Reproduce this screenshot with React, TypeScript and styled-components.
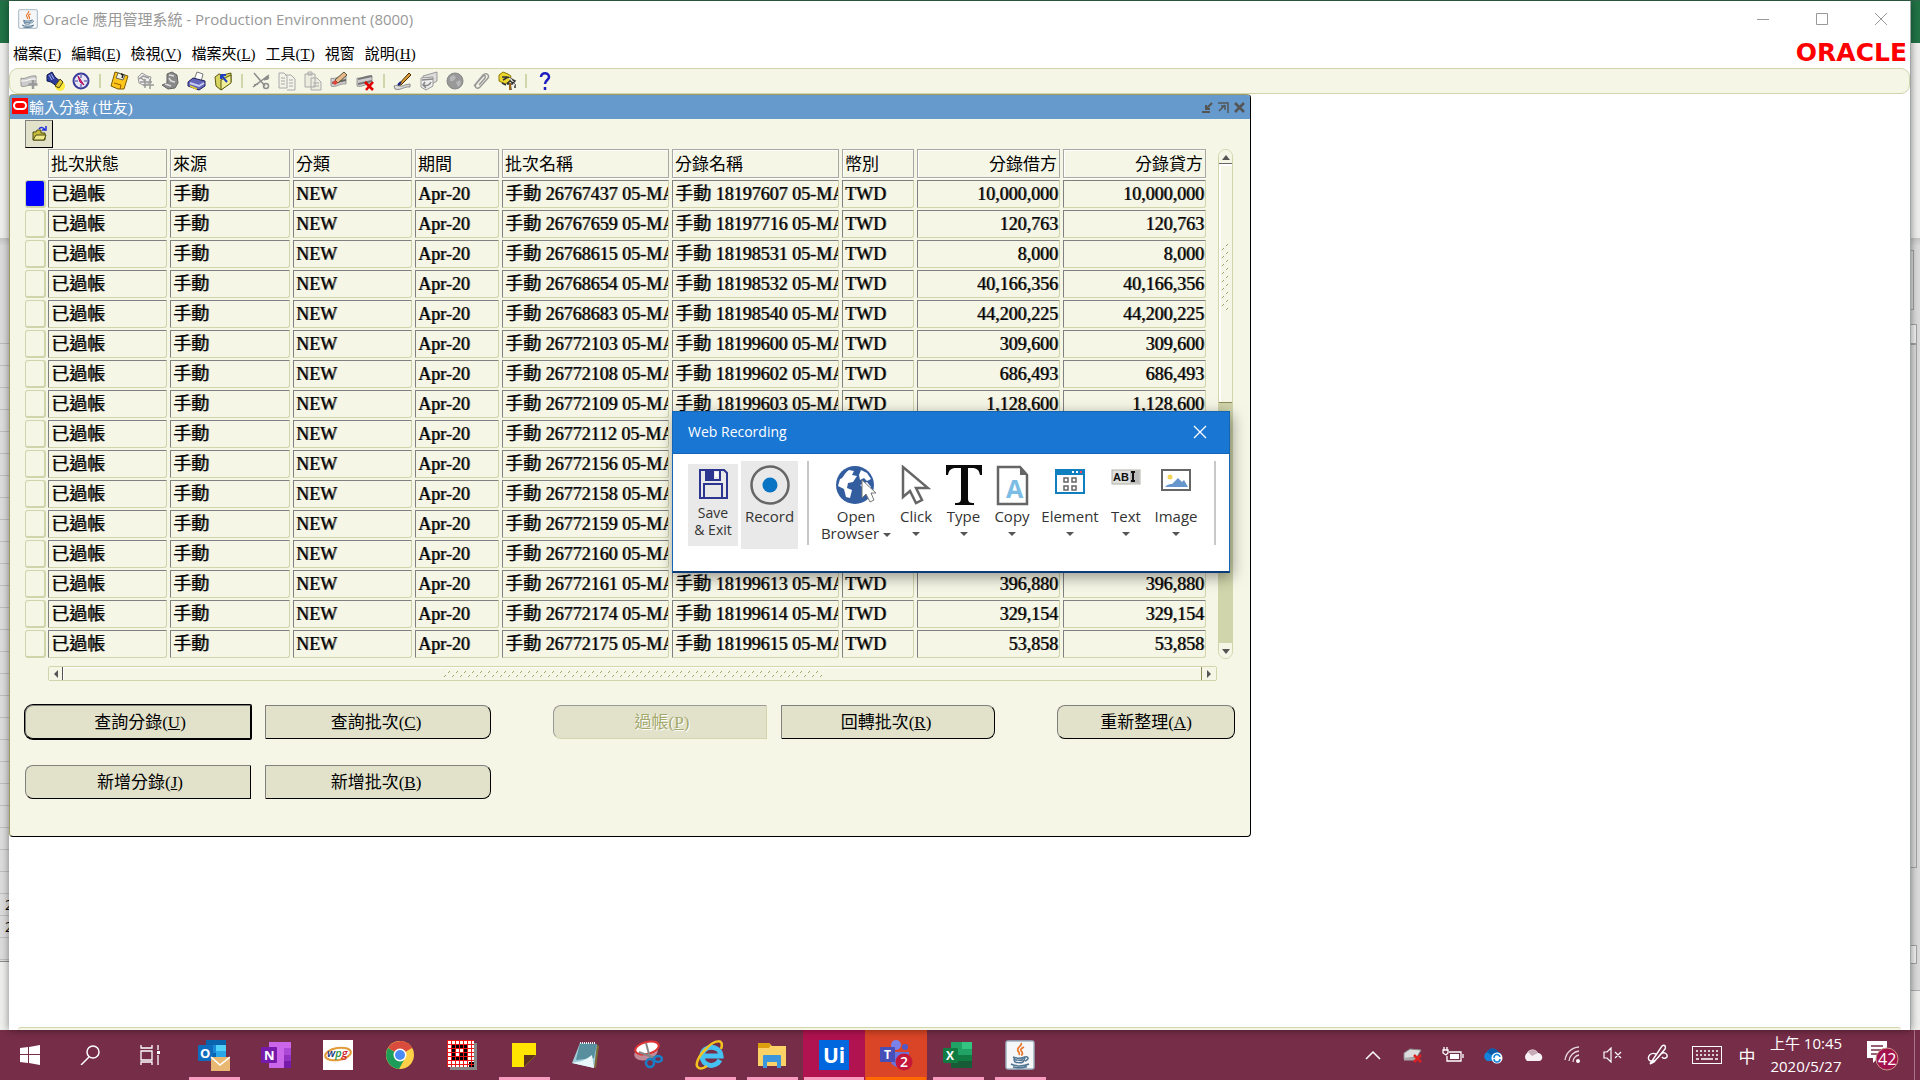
import React from "react";
import styled, { createGlobalStyle, css } from "styled-components";

const ui = `"Open Sans", "Noto Sans", "Noto Sans CJK TC", sans-serif`;
const serif = `"Liberation Serif", "Noto Sans CJK TC", serif`;
const cream = "#f6f6e6";
const olive = "#d0d5ab";
const khaki = "#e2e2cb";

const Global = createGlobalStyle`
  *, *::before, *::after { box-sizing: border-box; }
  html, body { margin: 0; height: 100%; overflow: hidden; }
  button { font: inherit; color: inherit; margin: 0; padding: 0; border: 0; background: none; }
  svg { display: block; flex: none; }
`;

const Desktop = styled.div`
  display: flex;
  flex-direction: column;
  height: 100vh;
  font-family: ${ui};
  border-top: 1px solid #31684b;
`;

const Stage = styled.div`
  flex: 1;
  min-height: 0;
  display: grid;
  grid-template-columns: 9px minmax(0, 1fr) 9px;
`;

const Behind = styled.div`
  display: flex;
  flex-direction: column;
  overflow: hidden;
  background: #efefed;
`;
const BehindTitle = styled.div`
  height: 42px;
  background: #217346;
`;
const BehindRibbon = styled.div`
  height: 195px;
`;
const BehindSheet = styled.div`
  height: 106px;
  background: linear-gradient(#c6c6c6, #dcdcdc 8px);
  border-bottom: 1px solid #bcbcbc;
`;
const BehindRows = styled.div`
  height: 618px;
  padding-top: 550px;
  background: repeating-linear-gradient(#dddddd 0 21px, #bfbfbf 21px 22px);
  border-bottom: 1px solid #8c8c8c;
  font-size: 14px;
  line-height: 22px;
  padding-left: 5px;
`;
const BehindGutter = styled.div`
  display: flex;
  flex-direction: column;
  height: 753px;
  padding-top: 12px;
  background: linear-gradient(#c6c6c6, #dcdcdc 8px);
  border-bottom: 1px solid #b0b0b0;
`;
const GutterBox = styled.div<{ $w: number; $h: number; $gap?: number; $light?: boolean }>`
  width: ${(p) => p.$w}px;
  height: ${(p) => p.$h}px;
  margin-bottom: ${(p) => p.$gap || 0}px;
  background: ${(p) => (p.$light ? "#f4f4f4" : "#dedede")};
  border: 1px solid #a4a4a4;
  border-left: 0;
`;

const AppWindow = styled.main`
  position: relative;
  display: flex;
  flex-direction: column;
  background: #fff;
  border-right: 1px solid #a0a5a5;
  box-shadow: 0 0 8px rgba(0, 0, 0, 0.45);
`;

const TitleBar = styled.header`
  display: flex;
  align-items: center;
  height: 36px;
  padding-left: 9px;
  color: #999;
`;
const TitleText = styled.h1`
  flex: 1;
  margin: 0 0 2px 5px;
  font-size: 15px;
  font-weight: 400;
`;
const Caption = styled.button`
  width: 59px;
  height: 36px;
  display: grid;
  place-items: center;
`;

const MenuRow = styled.div`
  display: flex;
  height: 31px;
  align-items: center;
  justify-content: space-between;
  padding: 0 3px 0 4px;
`;
const Menu = styled.nav`
  display: flex;
  gap: 10px;
  padding-top: 2px;
  font: 15px/30px ${serif};
`;
const Brand = styled.span`
  color: #f00;
  font: 700 25px/30px "DejaVu Sans", sans-serif;
`;

const Toolbar = styled.div`
  display: flex;
  align-items: center;
  height: 26px;
  padding-left: 6px;
  background: ${cream};
  border: 1px solid ${olive};
  border-radius: 9px;
`;
const ToolButton = styled.button`
  width: 26px;
  height: 24px;
  display: grid;
  place-items: center;
`;
const ToolSep = styled.span`
  width: 2px;
  height: 14px;
  margin: 0 5px;
  background: ${olive};
`;

const Form = styled.section`
  align-self: flex-start;
  background: ${cream};
  border: 1px solid #000;
  border-left-color: #9c9c62;
  border-top-color: #9c9c62;
  border-radius: 4px;
  padding-bottom: 37px;
`;
const FormTitle = styled.header`
  display: flex;
  align-items: center;
  height: 24px;
  background: #6699cc;
  color: #fff;
  padding: 0 3px 0 2px;
  font: 15px/24px ${serif};
  border-radius: 0 3px 0 0;
`;
const FormName = styled.h2`
  flex: 1;
  margin: 0;
  padding: 2px 0 0 1px;
  font: inherit;
`;
const FormControl = styled.button`
  width: 16px;
  height: 20px;
  display: grid;
  place-items: center;
`;
const FolderButton = styled.button`
  display: grid;
  place-items: center;
  width: 28px;
  height: 28px;
  margin: 1px 0 0 15px;
  background: ${khaki};
  border: 1px solid #000;
  border-left-color: #808080;
  border-top-color: #808080;
`;

const GridRow = styled.div`
  display: flex;
  align-items: flex-start;
  padding: 0 17px 0 12px;
`;
const Table = styled.table`
  table-layout: fixed;
  width: 1187px;
  border-spacing: 3px 2px;
  border-collapse: separate;
  margin-top: -1px;
  font-family: ${serif};
`;
const Th = styled.th<{ $right?: boolean }>`
  height: 29px;
  padding: 2px 2px 0;
  overflow: hidden;
  white-space: nowrap;
  border: 1px solid #a8a8a4;
  box-shadow: inset 1px 1px #fff, 0 1px #fff;
  font-size: 17px;
  line-height: 25px;
  font-weight: 400;
  text-align: ${(p) => (p.$right ? "right" : "left")};
`;
const Corner = styled.td`
  padding: 0;
`;
const Td = styled.td<{ $right?: boolean }>`
  height: 28px;
  padding: 0 1px 0 2px;
  overflow: hidden;
  white-space: nowrap;
  border: 1px solid ${olive};
  border-top-color: #808080;
  border-left-color: #808080;
  border-radius: 0 0 3px 0;
  font-size: 18px;
  line-height: 26px;
  text-shadow: 1px 0 0 rgba(0, 0, 0, 0.6);
  text-align: ${(p) => (p.$right ? "right" : "left")};
`;
const Marker = styled.td<{ $on: boolean }>`
  height: 28px;
  padding: 0;
  border: 1px solid ${olive};
  border-bottom-width: 2px;
  border-radius: 3px;
  box-shadow: 1px 0 ${olive};
  background: ${(p) => (p.$on ? "#0000ff" : cream)};
`;

const VScroll = styled.div`
  display: flex;
  flex-direction: column;
  width: 15px;
  height: 510px;
  margin: 1px 0 0 9px;
  border: 1px solid ${olive};
  border-radius: 8px;
  overflow: hidden;
`;
const VThumb = styled.div`
  height: 240px;
  display: grid;
  place-items: center;
  padding-bottom: 12px;
  border-top: 1px solid #666;
  border-bottom: 1px solid #8c8c5a;
  box-shadow: inset 2px 2px #fff;
`;
const VTrack = styled.div`
  flex: 1;
  background: ${olive};
`;
const ArrowBox = styled.div<{ $w: number; $h: number }>`
  width: ${(p) => p.$w}px;
  height: ${(p) => p.$h}px;
  display: grid;
  place-items: center;
  background: ${cream};
`;
const HScroll = styled.div`
  display: flex;
  height: 15px;
  margin: 6px 33px 0 38px;
  border: 1px solid ${olive};
  border-radius: 2px;
`;
const HThumb = styled.div`
  flex: 1;
  display: grid;
  place-items: center;
  padding-left: 4px;
  border-left: 1px solid #555;
  border-right: 1px solid #8c8c5a;
  box-shadow: inset 1px 1px #fff;
`;

const Actions = styled.div`
  display: grid;
  row-gap: 26px;
  padding: 24px 14px 0 15px;
`;
const ActionRow = styled.div`
  display: flex;
  gap: 62px;
`;
const ActionGroup = styled.div`
  display: flex;
  gap: 14px;
`;
type ActionProps = { $w: number; $shape: "left" | "right" | "both"; $main?: boolean };
const radii = { left: "8px 1px 1px 8px", right: "1px 8px 8px 1px", both: "8px" };
const insets = { left: "2px 0 0 4px", right: "2px 4px 0 0", both: "2px 0 0" };
const Action = styled.button<ActionProps>`
  width: ${(p) => p.$w}px;
  height: 34px;
  padding: ${(p) => insets[p.$shape]};
  background: ${khaki};
  border: 1px solid #000;
  border-top-color: #808080;
  border-left-color: #808080;
  border-radius: ${(p) => radii[p.$shape]};
  font: 17px/30px ${serif};
  color: #000;
  ${(p) =>
    p.$main &&
    css`
      box-shadow: 0 0 0 1px #000;
    `}
  &:disabled {
    color: #a3a86c;
    border-color: #999 ${olive} ${olive} #999;
    text-shadow: 1px 1px #fff;
  }
`;

const StatusLine = styled.div`
  height: 3px;
  margin: auto 9px 0;
  background: ${cream};
  border-top: 1px solid ${olive};
  border-radius: 4px 4px 0 0;
`;

const Dialog = styled.section`
  position: absolute;
  left: 663px;
  top: 410px;
  width: 558px;
  background: #fff;
  border: 1px solid #1565b5;
  border-bottom: 2px solid #0b3c78;
  box-shadow: 2px 4px 14px rgba(0, 0, 0, 0.4);
`;
const DialogTitle = styled.header`
  display: flex;
  align-items: center;
  justify-content: space-between;
  height: 42px;
  padding: 0 22px 2px 15px;
  background: #1976d2;
  border-bottom: 1px solid #1565b5;
  color: #fff;
`;
const DialogName = styled.h2`
  margin: 0;
  font-size: 14px;
  font-weight: 400;
`;
const DialogBody = styled.div`
  display: flex;
  align-items: flex-start;
  padding: 7px 0 22px 15px;
`;
const Divider = styled.span`
  flex: none;
  width: 2px;
  height: 84px;
  margin: 0 9px;
  background: #c8c8c8;
`;
const RecButton = styled.button<{ $w: number; $filled?: boolean }>`
  flex: none;
  display: flex;
  flex-direction: column;
  align-items: center;
  width: ${(p) => p.$w}px;
  height: 88px;
  padding-top: 4px;
  font-size: 15px;
  line-height: 17px;
  color: #333;
  white-space: nowrap;
  background: ${(p) => (p.$filled ? "#e9e9e9" : "transparent")};
`;
const SaveButton = styled(RecButton)`
  height: 82px;
  margin: 3px 3px 0 0;
  font-size: 14px;
`;
const RecIcon = styled.span<{ $h?: number }>`
  height: ${(p) => p.$h || 43}px;
  display: flex;
  align-items: flex-start;
`;
const Caret = styled.i`
  display: inline-block;
  border: 4px solid transparent;
  border-top-color: #555;
  border-bottom: 0;
  margin: 7px 0 2px 4px;
`;
const CaretBelow = styled(Caret)`
  margin-left: 0;
`;

const Taskbar = styled.footer`
  display: flex;
  height: 50px;
  flex: none;
  background: #762d48;
  color: #fff;
`;
const Apps = styled.div`
  display: flex;
  flex: 1;
  margin-left: 3px;
`;
const SysButton = styled.button`
  width: 60px;
  height: 50px;
  display: grid;
  place-items: center;
`;
const AppButton = styled.button<{ $bg?: string; $line?: string }>`
  width: 62px;
  height: 50px;
  display: grid;
  place-items: center;
  background-color: ${(p) => p.$bg || "transparent"};
  ${(p) =>
    p.$line &&
    css`
      background-image: linear-gradient(${p.$line}, ${p.$line});
      background-repeat: no-repeat;
      background-size: ${p.$bg ? "60px" : "51px"} 3px;
      background-position: center bottom;
    `}
`;
const TrayButton = styled.button<{ $w: number }>`
  width: ${(p) => p.$w}px;
  height: 50px;
  display: grid;
  place-items: center;
  font-size: 17px;
`;
const Clock = styled.time`
  width: 88px;
  text-align: center;
  font-size: 15px;
  line-height: 23px;
  padding-top: 2px;
`;
const PeekEdge = styled.span`
  width: 6px;
  border-left: 1px solid #a77388;
`;

const I = ({ s = 20, children }: { s?: number; children: React.ReactNode }) => (
  <svg width={s} height={s} viewBox="0 0 20 20" fill="none" aria-hidden="true">
    {children}
  </svg>
);

const JavaCup = ({ s }: { s: number }) => (
  <svg width={s} height={s} viewBox="0 0 30 30" fill="none" aria-hidden="true">
    <rect x="1" y="1" width="28" height="28" rx="2" fill="#f4f6f7" stroke="#9fb4c2" strokeWidth="1.4" />
    <path d="M16 3c2 3-5 4-3 8 1 2 2 2 1 4M19 7c-4 2-4 3-2 5 1 2 0 3-1 3" stroke="#e8762c" strokeWidth="1.7" />
    <path d="M8 17c3 1.500 9 1.500 12 0M9 17c0 4 1 5 1 5 3 1 6 1 8 0 1-1 1.500-3 2-5 3-1 5 2 0 4M10 19.500c3 1 6 1 8 0M6 24c4 2.500 13 2.500 18 0M8 27c5 1 10 1 14-.5" stroke="#4f7492" strokeWidth="1.500" />
  </svg>
);

const sheet = <path d="M2 7c4 2 8-3 15-2v8c-6-1-10 4-15 2z" fill="#ccc" stroke="#999" />;
const toolIcons: Record<string, React.ReactNode> = {
  新增: <>{sheet}<path d="M2 10c5 1 9-3 15-2" stroke="#fff" /><path d="M14 9v9M9.500 13.500h9" stroke="#999" strokeWidth="2.500" /></>,
  尋找: <><circle cx="15" cy="15" r="5" fill="#ffec3d" /><path d="M2 4l5-3 3 5 6 5-3 5-7-5-4-1z" fill="#2d3b9c" stroke="#101850" /><path d="M4 4l3 5M6 3l3 5" stroke="#a9b5ee" /><path d="M10 15l5-7 3 3-4 6z" fill="#e2c834" stroke="#4b4310" /></>,
  導覽器: <><circle cx="10" cy="10" r="7.500" fill="#e6e6f4" stroke="#3b3b9b" strokeWidth="2" /><path d="M10 4v3M10 13v3M4 10h3M13 10h3" stroke="#3b3b9b" /><path d="M7 5l6 9-4-3z" fill="#e4a" stroke="#a05" /></>,
  "-1": null,
  儲存: <><path d="M6 1l13 4-4 13-6 0-7-3z" fill="#ffc71c" stroke="#7a5b00" /><path d="M9 2l7 2-2 5-7-2z" fill="#f2f2e4" stroke="#665" /><path d="M12 3l2 1-1 3" stroke="#222" strokeWidth="1.500" /><path d="M5 12l7 2-1 4" stroke="#9c5b00" /></>,
  下一步: <><path d="M3 6l4-4 5 3 4 1-1 5-5 4-6-3z" fill="#eee" stroke="#999" /><path d="M4 8l4-3 6 2M6 7l4 3M5 11h12M8 14h11M10 8v9M15 8v10" stroke="#999" strokeWidth="1.500" /></>,
  切換: <><path d="M6 3l5-2 5 3 1 8-3 5-7 1-6-4 5-2z" fill="#8a8a8a" stroke="#666" /><path d="M8 4l5 1M8 7l2 3 4 1M4 13l6 2" stroke="#ddd" strokeWidth="1.500" /></>,
  列印: <><path d="M7 9l3-8 6 2-2 8z" fill="#fff" stroke="#777" /><path d="M1 11l5-4 12 3v5l-6 4-11-4z" fill="#6166b8" stroke="#22225f" /><path d="M3 12l9 3 5-3" stroke="#c9cbf2" strokeWidth="2" /><path d="M3 15l7 3" stroke="#e6cc20" strokeWidth="1.500" /></>,
  關閉表單: <><path d="M2 6l4-3 4 1 8-2v9l-10 8-5-4z" fill="#d8d462" stroke="#5c5a10" /><path d="M8 9l10-5v8l-10 7z" fill="#f1ee98" stroke="#5c5a10" /><path d="M8 4l6 7M8 4h5M8 4v4" stroke="#1d3fc0" strokeWidth="2" /></>,
  "-2": null,
  剪下: <><path d="M3 2l11 13M2 16L18 4M3 14l4-1M13 9l5-3" stroke="#8d8d8d" strokeWidth="1.500" /><circle cx="15" cy="15" r="2.500" stroke="#8d8d8d" strokeWidth="1.500" /><circle cx="16" cy="7" r="1.500" stroke="#8d8d8d" /></>,
  複製: <path d="M2 2h5l3 3v12H2zM8 4h6l4 4v11h-8M4 7h4M4 10h4M4 13h4M12 9h4M12 12h4M12 15h4" fill="#f3f3e8" stroke="#aaa" />,
  貼上: <path d="M2 3h10v13H2zM5 1h4v3H5zM8 7h6l4 4v8H8zM10 12h6M10 15h6" fill="#ececdf" stroke="#aaa" />,
  清除記錄: <>{sheet}<path d="M3 12l14-3" stroke="#666" strokeWidth="2" /><path d="M6 9l9-8 3 3-9 8z" fill="#eab98b" stroke="#553" /><path d="M6 9l3 3-3 2-3-2z" fill="#e0463e" /></>,
  刪除記錄: <>{sheet}<path d="M3 8l14-3M3 13l14-3" stroke="#777" strokeWidth="2" /><path d="M10 11l8 8M18 11l-7 8" stroke="#e00000" strokeWidth="2.500" /></>,
  "-3": null,
  編輯: <><path d="M1 15c4-2 6 2 11-1l5-1v3c-6-1-9 4-15 2z" fill="#ddd" stroke="#888" /><path d="M5 14L16 2l2 2L8 14z" fill="#d99b33" stroke="#4a2c00" /><path d="M5 14l3-3" stroke="#128" strokeWidth="2" /></>,
  縮放: <><path d="M4 5l14-4v9l-9 5-5-2z" fill="#ddd" stroke="#999" /><path d="M2 7l12-1v9l-7 4-5-3z" fill="#eee" stroke="#999" /><path d="M3 9l11-1M12 11c-2 4-5 4-8 3M6 11l-2 3 3 3" stroke="#888" strokeWidth="1.500" /></>,
  翻譯: <><circle cx="10" cy="10" r="8" fill="#999" stroke="#888" /><path d="M5 6l4-2 2 3-3 3-3 0zM11 11l4-2 1 4-3 3z" fill="#b7b7b7" /></>,
  附件: <path d="M3 15L12 4c3-3 7 0 5 3L9 16c-3 3-6 0-4-3l7-8c2-1 3 0 2 2l-6 7" stroke="#999" strokeWidth="1.500" />,
  資料夾工具: <><path d="M2 4l4-3 5 2 3 2-1 5-5 3-6-3z" fill="#ecd52c" stroke="#8a7a00" /><path d="M5 6h5M6 9l5-3 7 4-2 2-3-2-3 3M10 13l8 0M18 13v4M5 12l4 2M13 12l1 7" stroke="#333" strokeWidth="1.500" /><path d="M13 12v7" stroke="#996515" strokeWidth="2" /><path d="M12 7l3 2M16 13l2 1" stroke="#ddd" strokeWidth="1.500" /></>,
  "-4": null,
};

const menus: [string, string][] = [
  ["檔案", "F"], ["編輯", "E"], ["檢視", "V"], ["檔案夾", "L"], ["工具", "T"], ["視窗", ""], ["說明", "H"],
];

const widths = [20, 119, 120, 119, 84, 167, 167, 72, 143, 143];
const heads = ["批次狀態", "來源", "分類", "期間", "批次名稱", "分錄名稱", "幣別", "分錄借方", "分錄貸方"];
const rows: [string, string?, string?][] = [
  ["26767437", "18197607", "10,000,000"],
  ["26767659", "18197716", "120,763"],
  ["26768615", "18198531", "8,000"],
  ["26768654", "18198532", "40,166,356"],
  ["26768683", "18198540", "44,200,225"],
  ["26772103", "18199600", "309,600"],
  ["26772108", "18199602", "686,493"],
  ["26772109", "18199603", "1,128,600"],
  ["26772112"],
  ["26772156"],
  ["26772158"],
  ["26772159"],
  ["26772160"],
  ["26772161", "18199613", "396,880"],
  ["26772174", "18199614", "329,154"],
  ["26772175", "18199615", "53,858"],
];

const Key = ({ k }: { k: string }) => <>({<u>{k}</u>})</>;

const Grip = ({ w, h }: { w: number; h: number }) => (
  <svg width={w} height={h} aria-hidden="true">
    <defs>
      <pattern id={`grip${w}`} width="8" height="8" patternUnits="userSpaceOnUse">
        <path d="M4 3l2-2M0 7l2-2" stroke="#a2a56d" />
        <path d="M3 2l1-1M7 6l1-1" stroke="#fff" />
      </pattern>
    </defs>
    <rect width={w} height={h} fill={`url(#grip${w})`} />
  </svg>
);

const Tri = ({ d, w = 8, h = 8 }: { d: string; w?: number; h?: number }) => (
  <svg width={w} height={h} viewBox="0 0 8 8" aria-hidden="true"><path d={d} fill="#555" /></svg>
);

const Box = ({ w, h, children }: { w: number; h: number; children: React.ReactNode }) => (
  <svg width={w} height={h} viewBox={`0 0 ${w} ${h}`} fill="none" aria-hidden="true">{children}</svg>
);

const recTools: { name: string; w: number; icon: React.ReactNode }[] = [
  {
    name: "Click", w: 44,
    icon: <Box w={30} h={40}><path d="M2 2v30l7-6 6 12 6-3-6-12h12z" fill="#fff" stroke="#666" strokeWidth="2.500" /></Box>,
  },
  {
    name: "Type", w: 51,
    icon: <Box w={36} h={40}><path d="M0 0h36v10h-2c-1-5-3-7-8-7h-4v30c0 4 1 5 6 5v2H9v-2c5 0 6-1 6-5V3h-5c-5 0-7 2-8 7H0z" fill="#0a0a0a" /></Box>,
  },
  {
    name: "Copy", w: 46,
    icon: (
      <Box w={33} h={41}>
        <path d="M2 2h22l7 8v29H2z" fill="#fff" stroke="#666" strokeWidth="2.500" />
        <path d="M24 1v9h8z" fill="#666" />
        <text x="10" y="33" fontFamily="Open Sans" fontSize="25" fontWeight="700" fill="#7bbde4">A</text>
      </Box>
    ),
  },
  {
    name: "Element", w: 70,
    icon: (
      <Box w={30} h={30}>
        <rect x="1" y="5" width="28" height="23" fill="#fff" stroke="#0f7fc0" strokeWidth="2" />
        <path d="M0 4h30v6H0z" fill="#0f7fc0" />
        <path d="M17 7h2M21 7h2" stroke="#fff" strokeWidth="2" /><path d="M25 7h2" stroke="#f45" strokeWidth="2" />
        <path d="M9 13h4v4H9zM17 13h4v4h-4zM9 21h4v4H9zM17 21h4v4h-4z" stroke="#666" strokeWidth="1.500" />
      </Box>
    ),
  },
  {
    name: "Text", w: 42,
    icon: (
      <Box w={30} h={24}>
        <rect x="1" y="5" width="28" height="14" fill="#e0e0dc" stroke="#b0b0a8" />
        <rect x="19" y="6" width="9" height="12" fill="#bbb" />
        <text x="2" y="16" fontFamily="Liberation Sans" fontSize="11" fontWeight="700" fill="#111">AB</text>
        <path d="M20 7h4M20 16h4M22 7v9" stroke="#111" strokeWidth="2" />
      </Box>
    ),
  },
  {
    name: "Image", w: 58,
    icon: (
      <Box w={30} h={28}>
        <rect x="1" y="5" width="28" height="20" fill="#fff" stroke="#666" strokeWidth="2" />
        <circle cx="9" cy="12" r="2.500" fill="#f3d55b" />
        <path d="M4 22c3-3 5-3 7-3l6-6 4 4 2-2 4 7z" fill="#6796cc" />
      </Box>
    ),
  },
];

const pink = "#f89cc0";
const apps: { name: string; bg?: string; line?: string; icon: React.ReactNode }[] = [
  {
    name: "Outlook", line: pink,
    icon: (
      <Box w={32} h={32}>
        <path d="M8 1h20v20H8z" fill="#0a64ad" /><path d="M8 6h10v8H8z" fill="#1a8ad8" /><path d="M18 6h10v6H18z" fill="#50d0f8" /><path d="M18 12h10v8H18z" fill="#28a8ea" />
        <rect y="6" width="15" height="16" rx="1" fill="#0f6cbd" />
        <text x="2" y="19" fontFamily="Open Sans" fontWeight="700" fontSize="13" fill="#fff">O</text>
        <path d="M13 18h19v14H13z" fill="#e9b973" /><path d="M13 18l9 8 10-8" stroke="#fff" strokeWidth="1.500" />
      </Box>
    ),
  },
  {
    name: "OneNote",
    icon: (
      <Box w={32} h={30}>
        <path d="M9 2h22v26H9z" fill="#cb66ea" /><path d="M24 8h7v7h-7z" fill="#ab48d6" /><path d="M24 15h7v6h-7z" fill="#9332c2" /><path d="M24 21h7v7h-7z" fill="#7719aa" />
        <rect x="1" y="7" width="16" height="16" rx="1" fill="#7719aa" />
        <text x="4" y="20" fontFamily="Open Sans" fontWeight="700" fontSize="13" fill="#fff">N</text>
      </Box>
    ),
  },
  {
    name: "wpg",
    icon: (
      <Box w={30} h={30}>
        <path d="M0 0h30v30H0z" fill="#fff" />
        <ellipse cx="15" cy="14" rx="13" ry="6" transform="rotate(-10 15 14)" stroke="#e39a3a" strokeWidth="2" />
        <text x="4" y="17" fontFamily="Open Sans" fontStyle="italic" fontWeight="600" fontSize="11"><tspan fill="#223a80">w</tspan><tspan fill="#289040">p</tspan><tspan fill="#d02030">g</tspan></text>
      </Box>
    ),
  },
  {
    name: "Chrome",
    icon: (
      <Box w={28} h={28}>
        <circle cx="14" cy="14" r="14" fill="#fdd047" />
        <path d="M14 14L2 7a14 14 0 0 1 24 0z" fill="#d94c3d" /><path d="M2 7a14 14 0 0 0 11 21l6-11-5-3z" fill="#1c9e5a" />
        <path d="M14 7h12a14 14 0 0 0-12-7z" fill="#d94c3d" />
        <circle cx="14" cy="14" r="6.500" fill="#fff" /><circle cx="14" cy="14" r="5" fill="#4a8af4" />
      </Box>
    ),
  },
  {
    name: "Grid",
    icon: (
      <Box w={30} h={30}>
        <path d="M3 3h27v27H3z" fill="#888" /><path d="M0 0h27v27H0z" fill="#fff" />
        <path d="M4 4h17v17H4z" fill="#000" /><path d="M8 8h9v5h-4v4H8z" fill="#fff" /><path d="M22 22h5v5h-5z" fill="#000" />
        <path d="M0 .5h27M0 4.500h27M0 8.500h27M0 12.500h27M0 16.500h27M0 20.500h27M0 24.500h27M.5 0v27M4.500 0v27M8.500 0v27M12.500 0v27M16.500 0v27M20.500 0v27M24.500 0v27" stroke="#e81818" />
      </Box>
    ),
  },
  { name: "Sticky Notes", line: pink, icon: <Box w={24} h={24}><path d="M0 0h24v12L12 24H0z" fill="#ffe500" /><path d="M12 24V12h12z" fill="#5c3320" /></Box> },
  {
    name: "Notepad",
    icon: <Box w={30} h={28}><path d="M25 3l3 2-3 22-5-2z" fill="#7b6b35" /><path d="M9 2l17 1-3 24-22-5z" fill="#9ecbd8" /><path d="M9 2l17 1-3 14-18 2z" fill="#578f9f" /><path d="M1 22c6-2 10 0 20-8l2 13z" fill="#eaf7fa" /><path d="M9 2h16" stroke="#eee" strokeWidth="2" strokeDasharray="1 1" /></Box>,
  },
  {
    name: "Snipping Tool",
    icon: <Box w={30} h={30}><ellipse cx="13" cy="13" rx="12" ry="7" transform="rotate(-15 13 13)" fill="#c08a99" /><ellipse cx="14" cy="8" rx="12" ry="6" transform="rotate(-15 14 8)" fill="#fff" stroke="#e03434" strokeWidth="2" /><path d="M13 3l4 15M6 12l16 6" stroke="#888" strokeWidth="2" /><circle cx="17" cy="23" r="4" stroke="#1a7fc4" strokeWidth="2.500" /><ellipse cx="25" cy="19" rx="4" ry="3" stroke="#1a7fc4" strokeWidth="2.500" /></Box>,
  },
  {
    name: "Internet Explorer", line: pink,
    icon: <Box w={30} h={30}><path d="M25 20c-5 9-18 6-18-4 0-11 18-12 19 0H9" stroke="#45c1f2" strokeWidth="5" /><path d="M26 9c4-11-7-9-14-1C3 16-1 26 4 28c2 1 5 0 8-2" stroke="#f4c320" strokeWidth="2.500" /></Box>,
  },
  {
    name: "檔案總管", line: pink,
    icon: <Box w={28} h={26}><path d="M0 1h11l3 3h14v20H0z" fill="#fbd266" /><path d="M0 1h11l2 2-2 3H0z" fill="#dd9e10" /><path d="M5 26V14q0-1 1-1h16q1 0 1 1v12h-4v-6H9v6z" fill="#3c96dc" /></Box>,
  },
  { name: "UiPath", bg: "#b0134f", line: pink, icon: <Box w={30} h={30}><path d="M0 0h30v30H0z" fill="#0067df" /><text x="4" y="23" fontFamily="Open Sans" fontWeight="700" fontSize="21" fill="#fff">Ui</text></Box> },
  {
    name: "Teams", bg: "#d94526", line: "#ff6a00",
    icon: (
      <Box w={34} h={32}>
        <circle cx="17" cy="6" r="5" fill="#7b83eb" /><circle cx="26" cy="8" r="3" fill="#5059c9" /><path d="M10 13h20v8c-2 9-16 9-18 2z" fill="#6c74dc" />
        <rect x="1" y="8" width="15" height="15" rx="1" fill="#464eb8" />
        <text x="5" y="20" fontFamily="Open Sans" fontWeight="700" fontSize="12" fill="#fff">T</text>
        <circle cx="25" cy="23" r="8.500" fill="#c4173a" /><text x="21" y="28" fontFamily="Open Sans" fontWeight="600" fontSize="14" fill="#fff">2</text>
      </Box>
    ),
  },
  {
    name: "Excel", line: pink,
    icon: <Box w={30} h={28}><path d="M8 1h21v26H8z" fill="#21a366" /><path d="M19 1h10v7H19z" fill="#33c481" /><path d="M8 14h21v7H8z" fill="#107c41" /><path d="M8 20h21v7H8z" fill="#185c37" /><rect y="7" width="15" height="15" rx="1" fill="#107c41" /><text x="3" y="19" fontFamily="Open Sans" fontWeight="700" fontSize="12" fill="#fff">X</text></Box>,
  },
  { name: "Java", line: pink, icon: <JavaCup s={30} /> },
];

const tray: { name: string; w: number; icon: React.ReactNode }[] = [
  { name: "顯示隱藏的圖示", w: 40, icon: <Box w={16} h={10}><path d="M1 9l7-7 7 7" stroke="#fff" strokeWidth="1.500" /></Box> },
  { name: "磁碟", w: 40, icon: <Box w={22} h={18}><path d="M2 7l6-4 11 1-4 7-13 2z" fill="#ddd" stroke="#888" /><path d="M2 13h12" stroke="#aaa" strokeWidth="3" /><path d="M12 9l7 7M19 9l-7 7" stroke="#d22" strokeWidth="2.500" /></Box> },
  { name: "電池", w: 40, icon: <Box w={22} h={16}><path d="M7 5h12v9H5V9M21 7v4M1 3h5v3l-2 2-3-2zM2 0v3M5 0v3" stroke="#fff" strokeWidth="1.300" /><path d="M8 7h9v5H8z" fill="#fff" /></Box> },
  { name: "OneDrive", w: 40, icon: <Box w={22} h={18}><path d="M5 15a5 5 0 0 1 0-9 6 6 0 0 1 11 0c4 0 5 6 2 9z" fill="#1482d8" /><path d="M5 6a6 6 0 0 1 11 0L9 9z" fill="#0c5ba8" /><circle cx="15" cy="12" r="5.500" fill="#fff" /><path d="M12 12a3 3 0 0 1 6-1M18 13a3 3 0 0 1-6 0" stroke="#1482d8" strokeWidth="1.500" /></Box> },
  { name: "雲端", w: 40, icon: <Box w={22} h={14}><path d="M5 13a5 5 0 0 1 0-8 6 6 0 0 1 11 0c5 0 6 8 1 8z" fill="#f6f0f2" /><path d="M6 4a6 6 0 0 1 10 1l-6 3z" fill="#c8abb6" /></Box> },
  { name: "無線網路", w: 40, icon: <Box w={18} h={18}><path d="M1 14A15 15 0 0 1 15 1M5 15A11 11 0 0 1 15 5M9 16a7 7 0 0 1 6-7" stroke="#e8d9df" strokeWidth="1.300" /><circle cx="14" cy="15" r="2" fill="#fff" /></Box> },
  { name: "靜音", w: 40, icon: <Box w={20} h={16}><path d="M1 5h3l4-4v14l-4-4H1zM12 5l6 6M18 5l-6 6" stroke="#fff" strokeWidth="1.200" /></Box> },
  { name: "手寫筆", w: 49, icon: <Box w={22} h={22}><path d="M3 20L15 2c3-2 4 1 3 3L7 18l-4 2M9 10c-5-2-9 2-7 6 4 4 9-2 12-6 3-3 7 0 6 3-3 3-5 0-5 0" stroke="#fff" strokeWidth="1.400" /></Box> },
  { name: "觸控鍵盤", w: 50, icon: <Box w={30} h={18}><rect x=".5" y=".5" width="29" height="17" stroke="#fff" /><path d="M4 5h22M4 9h22" stroke="#fff" strokeWidth="1.500" strokeDasharray="2 2" /><path d="M4 13h3M9 13h12M23 13h3" stroke="#fff" strokeWidth="1.500" /></Box> },
];

export default function App() {
  return (
    <Desktop>
      <Global />
      <Stage>
        <Behind>
          <BehindTitle />
          <BehindRibbon />
          <BehindSheet />
          <BehindRows>2<br />2</BehindRows>
        </Behind>
        <AppWindow>
          <TitleBar>
            <JavaCup s={20} />
            <TitleText>Oracle 應用管理系統 - Production Environment (8000)</TitleText>
            <Caption aria-label="最小化"><Box w={12} h={12}><path d="M0 6.500h12" stroke="#999" /></Box></Caption>
            <Caption aria-label="最大化"><Box w={12} h={12}><path d="M.5.5h11v11H.5z" stroke="#999" /></Box></Caption>
            <Caption aria-label="關閉"><Box w={12} h={12}><path d="M0 0l12 12M12 0L0 12" stroke="#999" /></Box></Caption>
          </TitleBar>
          <MenuRow>
            <Menu>
              {menus.map(([t, k]) => (
                <button key={t}>{t}{k && <Key k={k} />}</button>
              ))}
            </Menu>
            <Brand>ORACLE</Brand>
          </MenuRow>
          <Toolbar role="toolbar">
            {Object.entries(toolIcons).map(([name, icon]) =>
              name.startsWith("-") ? <ToolSep key={name} /> : (
                <ToolButton key={name} aria-label={name}><I>{icon}</I></ToolButton>
              )
            )}
            <ToolButton aria-label="說明">
              <I><path d="M6 6c0-5 8-5 8 0 0 3-4 3-4 7M10 16v3" stroke="#1c1cc0" strokeWidth="2.500" /></I>
            </ToolButton>
          </Toolbar>

          <Form>
            <FormTitle>
              <Box w={16} h={20}><path d="M0 1h16v16H0z" fill="#f00" /><rect x="2" y="5" width="12" height="7" rx="3.500" stroke="#fff" strokeWidth="2" /></Box>
              <FormName>輸入分錄 (世友)</FormName>
              <FormControl aria-label="縮小"><Box w={11} h={11}><path d="M0 10h8M10 1L5 6M4 3v4h4" stroke="#555" strokeWidth="2" /></Box></FormControl>
              <FormControl aria-label="放大"><Box w={11} h={11}><path d="M0 1h10v10M1 9l6-6M3 4h4v4" stroke="#555" strokeWidth="1.500" /></Box></FormControl>
              <FormControl aria-label="關閉表單視窗"><Box w={11} h={11}><path d="M1 1l9 9M10 1l-9 9" stroke="#555" strokeWidth="2.500" /></Box></FormControl>
            </FormTitle>
            <FolderButton aria-label="開啟資料夾">
              <Box w={16} h={16}><path d="M2 14V6h3l1-2h4v3h4v7z" fill="#c8bd3c" stroke="#4d4a10" /><path d="M2 14l3-5h10l-2 5z" fill="#efe98a" stroke="#4d4a10" /><path d="M8 3c2-3 5-1 6 1M11 4h4V0" stroke="#1c2fe0" strokeWidth="1.500" /></Box>
            </FolderButton>
            <GridRow>
              <Table>
                <colgroup>{widths.map((w, i) => <col key={i} width={w} />)}</colgroup>
                <thead>
                  <tr>
                    <Corner />
                    {heads.map((h, i) => <Th key={h} $right={i > 6}>{h}</Th>)}
                  </tr>
                </thead>
                <tbody>
                  {rows.map(([batch, entry, amount], i) => (
                    <tr key={batch}>
                      <Marker $on={i === 0} />
                      <Td>已過帳</Td>
                      <Td>手動</Td>
                      <Td>NEW</Td>
                      <Td>Apr-20</Td>
                      <Td>手動 {batch} 05-MAY</Td>
                      <Td>{entry && `手動 ${entry} 05-MAY`}</Td>
                      <Td>{entry && "TWD"}</Td>
                      <Td $right>{amount}</Td>
                      <Td $right>{amount}</Td>
                    </tr>
                  ))}
                </tbody>
              </Table>
              <VScroll>
                <ArrowBox $w={13} $h={13}><Tri d="M0 7l4-5 4 5z" /></ArrowBox>
                <VThumb><Grip w={8} h={68} /></VThumb>
                <VTrack />
                <ArrowBox $w={13} $h={15}><Tri d="M0 2l4 5 4-5z" /></ArrowBox>
              </VScroll>
            </GridRow>
            <HScroll>
              <ArrowBox $w={13} $h={13}><Tri d="M6 0v8L2 4z" /></ArrowBox>
              <HThumb><Grip w={380} h={8} /></HThumb>
              <ArrowBox $w={14} $h={13}><Tri d="M2 0v8l4-4z" /></ArrowBox>
            </HScroll>
            <Actions>
              <ActionRow>
                <ActionGroup>
                  <Action $w={226} $shape="left" $main>查詢分錄<Key k="U" /></Action>
                  <Action $w={226} $shape="right">查詢批次<Key k="C" /></Action>
                </ActionGroup>
                <ActionGroup>
                  <Action $w={214} $shape="left" disabled>過帳<Key k="P" /></Action>
                  <Action $w={214} $shape="right">回轉批次<Key k="R" /></Action>
                </ActionGroup>
                <Action $w={178} $shape="both">重新整理<Key k="A" /></Action>
              </ActionRow>
              <ActionRow>
                <ActionGroup>
                  <Action $w={226} $shape="left">新增分錄<Key k="J" /></Action>
                  <Action $w={226} $shape="right">新增批次<Key k="B" /></Action>
                </ActionGroup>
              </ActionRow>
            </Actions>
          </Form>
          <StatusLine />

          <Dialog role="dialog" aria-label="Web Recording">
            <DialogTitle>
              <DialogName>Web Recording</DialogName>
              <button aria-label="Close"><Box w={14} h={14}><path d="M1 1l12 12M13 1L1 13" stroke="#fff" strokeWidth="1.300" /></Box></button>
            </DialogTitle>
            <DialogBody>
              <SaveButton $w={50} $filled>
                <RecIcon $h={36}>
                  <Box w={30} h={34}><path d="M2 2h24l3 3v25H2zM8 2v10h14V2M6 30V16h18v14" stroke="#2c3690" strokeWidth="2" /><path d="M8 2h8v9H8z" fill="#2c3690" /><path d="M17 4h3v5h-3z" fill="#fff" /></Box>
                </RecIcon>
                <span>Save<br />&amp; Exit</span>
              </SaveButton>
              <RecButton $w={57} $filled>
                <RecIcon><Box w={40} h={40}><circle cx="20" cy="20" r="18.500" stroke="#666" strokeWidth="2.500" /><circle cx="20" cy="20" r="7.500" fill="#0a74c4" /></Box></RecIcon>
                Record
              </RecButton>
              <Divider />
              <RecButton $w={76}>
                <RecIcon>
                  <Box w={40} h={40}>
                    <circle cx="19" cy="20" r="19" fill="#325d9f" />
                    <path d="M4 14c3 0 4-6 9-9l5 1-2 4 5 1-4 6-5 1-1 5 5 2-2 8-4-1-2-8-6-3zM25 5l6 3 4 6-4 2-3-3-4 2-1-5zM24 20l7-3 4 5-3 5z" fill="#fff" />
                    <path d="M26 15v18l4-4 4 8 4-2-3-7h5z" fill="#fff" stroke="#777" />
                  </Box>
                </RecIcon>
                <span>Open<br />Browser<Caret /></span>
              </RecButton>
              {recTools.map((t) => (
                <RecButton key={t.name} $w={t.w}>
                  <RecIcon>{t.icon}</RecIcon>
                  {t.name}
                  <CaretBelow />
                </RecButton>
              ))}
              <Divider />
            </DialogBody>
          </Dialog>
        </AppWindow>
        <Behind>
          <BehindTitle />
          <BehindRibbon />
          <BehindGutter>
            <GutterBox $w={3} $h={60} $gap={14} />
            <GutterBox $w={6} $h={20} $light />
            <GutterBox $w={6} $h={524} $gap={77} />
            <GutterBox $w={6} $h={19} $light />
          </BehindGutter>
        </Behind>
      </Stage>

      <Taskbar>
        <SysButton aria-label="開始"><Box w={20} h={20}><path d="M0 3l8-1v7H0zM9 2l11-2v9H9zM0 10h8v8l-8-1zM9 10h11v10L9 18z" fill="#fff" /></Box></SysButton>
        <SysButton aria-label="搜尋"><Box w={20} h={20}><circle cx="13" cy="7" r="6" stroke="#fff" strokeWidth="1.500" /><path d="M9 12l-8 8" stroke="#fff" strokeWidth="1.500" /></Box></SysButton>
        <SysButton aria-label="工作檢視"><Box w={20} h={20}><path d="M1 6h11v9H1zM1 0v3h11V0M1 20v-3h11v3M18 0v5M18 10v10" stroke="#fff" strokeWidth="1.300" /><path d="M17 6h3v3h-3z" fill="#fff" /></Box></SysButton>
        <Apps>
          {apps.map((a) => (
            <AppButton key={a.name} aria-label={a.name} $bg={a.bg} $line={a.line}>{a.icon}</AppButton>
          ))}
        </Apps>
        {tray.map((t) => (
          <TrayButton key={t.name} aria-label={t.name} $w={t.w}>{t.icon}</TrayButton>
        ))}
        <TrayButton $w={30}>中</TrayButton>
        <Clock dateTime="2020-05-27T10:45">上午 10:45<br />2020/5/27</Clock>
        <TrayButton aria-label="通知 42" $w={64}>
          <Box w={34} h={32}>
            <path d="M2 2h20v17h-9l-5 5v-5H2z" fill="#fff" /><path d="M6 7h12M6 11h12M6 15h8" stroke="#762d48" strokeWidth="1.500" />
            <circle cx="22" cy="20" r="11" fill="#a2124c" stroke="#c98" /><text x="13" y="26" fontFamily="Open Sans" fontSize="16" fill="#fff">42</text>
          </Box>
        </TrayButton>
        <PeekEdge />
      </Taskbar>
    </Desktop>
  );
}
